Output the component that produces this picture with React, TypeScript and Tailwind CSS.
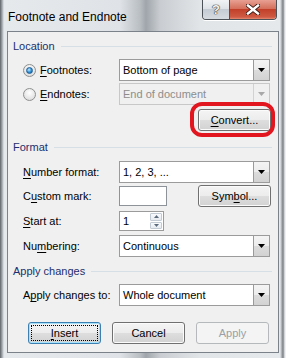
import React from 'react';

type Children = { children?: React.ReactNode };

// underlined access key, like the Win32 dialog labels
function Key({ children }: Children) {
  return <span className="underline decoration-1 underline-offset-[2px]">{children}</span>;
}

function GroupHeader({ title, className }: { title: string; className?: string }) {
  return (
    <div className={`flex h-[16px] items-center ${className ?? ''}`}>
      <span className="text-[#1a2f6e]">{title}</span>
      <div className="ml-[6px] h-px flex-1 bg-[#d5dfe5]" />
    </div>
  );
}

function Radio({ checked }: { checked?: boolean }) {
  return (
    <span className="flex h-[13px] w-[13px] items-center justify-center rounded-full border border-[#8e8f8f] bg-[radial-gradient(circle_at_50%_35%,#ffffff,#e2e2e2_70%,#cfcfcf)]">
      {checked && (
        <span className="h-[7px] w-[7px] rounded-full border border-[#1f5e96] bg-[radial-gradient(circle_at_40%_35%,#bfeaff,#2c8fd6_55%,#12558f)]" />
      )}
    </span>
  );
}

function DropArrow({ disabled }: { disabled?: boolean }) {
  return (
    <div
      className={`flex w-[16px] items-center justify-center border-l ${
        disabled
          ? 'border-[#d2d2d2] bg-[#f0f0f0]'
          : 'border-[#9a9a9a] bg-[linear-gradient(#f4f4f4,#ececec_50%,#dcdcdc_50%,#d2d2d2)]'
      }`}
    >
      <svg width="7" height="4" viewBox="0 0 7 4">
        <path d="M0 0h7L3.5 4z" fill={disabled ? '#a8a8a8' : '#000'} />
      </svg>
    </div>
  );
}

function Select({ value, disabled }: { value: string; disabled?: boolean }) {
  return (
    <div
      className={`flex h-[22px] w-[151px] border ${
        disabled ? 'border-[#c8c8c8] bg-[#f0f0f0] text-[#8d8d8d]' : 'border-[#9b9b9b] bg-white text-black'
      }`}
    >
      <div className="flex flex-1 items-center pl-[3px]">{value}</div>
      <DropArrow disabled={disabled} />
    </div>
  );
}

function Btn({ children, focused, disabled, className }: Children & { focused?: boolean; disabled?: boolean; className?: string }) {
  const look = disabled
    ? 'border-[#b5b9bc] bg-[#f4f4f4] text-[#9aa0a6]'
    : focused
      ? 'border-[#3c7fb1] shadow-[inset_0_0_0_1px_#a5e1fa] bg-[linear-gradient(#f4f4f4,#ececec_50%,#dedede_50%,#d2d2d2)] text-black'
      : 'border-[#707070] shadow-[inset_0_0_0_1px_#fbfbfb] bg-[linear-gradient(#f4f4f4,#ececec_50%,#dedede_50%,#d2d2d2)] text-black';
  return (
    <div className={`relative flex h-[22px] w-[73px] items-center justify-center rounded-[3px] border ${look} ${className ?? ''}`}>
      {focused && <div className="absolute inset-[2px] border border-dotted border-black" />}
      <span className="relative">{children}</span>
    </div>
  );
}

function Spinner({ value }: { value: string }) {
  return (
    <div className="flex h-[20px] w-[45px] border border-[#9b9b9b] bg-white">
      <div className="flex flex-1 items-center pl-[3px]">{value}</div>
      <div className="flex w-[14px] flex-col gap-px p-px">
        <div className="flex flex-1 items-center justify-center rounded-[1px] border border-[#c2cad3] bg-[linear-gradient(#f8fafc,#e6ebf0)]">
          <svg width="5" height="3" viewBox="0 0 5 3">
            <path d="M0 3h5L2.5 0z" fill="#5b6b7c" />
          </svg>
        </div>
        <div className="flex flex-1 items-center justify-center rounded-[1px] border border-[#c2cad3] bg-[linear-gradient(#f8fafc,#e6ebf0)]">
          <svg width="5" height="3" viewBox="0 0 5 3">
            <path d="M0 0h5L2.5 3z" fill="#5b6b7c" />
          </svg>
        </div>
      </div>
    </div>
  );
}

function Row({ label, children, className }: { label: React.ReactNode; className?: string } & Children) {
  return (
    <div className={`flex items-center pl-[10px] ${className ?? ''}`}>
      <div className="w-[96px]">{label}</div>
      {children}
    </div>
  );
}

export default function App() {
  return (
    <div className="relative h-[358px] w-[286px] overflow-hidden bg-[linear-gradient(90deg,#5e6368_0px,#9ea4aa_2px,#e6e9ec_4px,#dfe3e7_120px,#b9bec3_140px,#9fa5ab_146px,#c9cdd1_160px,#e2e5e8_200px,#e6e9ec_280px,#7a7f84_283px,#eef0f2_285px)] font-['Liberation_Sans',Arial,sans-serif] text-[11px] leading-[16px]">
      {/* title bar */}
      <div className="flex h-[31px] items-start">
        <div className="pl-[8px] pt-[9px] text-[12px] text-black">Footnote and Endnote</div>
        <div className="ml-auto mr-[9px] flex h-[20px] overflow-hidden rounded-b-[4px] border border-t-0 border-[#4c5258] shadow-[0_1px_0_#ffffff]">
          <div className="flex w-[27px] items-center justify-center border-r border-[#4c5258] bg-[linear-gradient(#f1f3f5,#dfe3e7_45%,#c6ccd3_50%,#d5dbe1)] text-[13px] font-bold text-[#f4f4f4] [text-shadow:0_0_1px_#333,0_0_1px_#333,0_0_1px_#333]">
            ?
          </div>
          <div className="flex w-[46px] items-center justify-center bg-[linear-gradient(#e8a092,#d4705c_45%,#c2402a_50%,#cf5a43_90%,#e58a72)]">
            <svg width="14" height="11" viewBox="0 0 14 11">
              <path d="M2 1.5 L12 9.5 M12 1.5 L2 9.5" stroke="#3a1a14" strokeWidth="4.2" strokeLinecap="square" />
              <path d="M2 1.5 L12 9.5 M12 1.5 L2 9.5" stroke="#ffffff" strokeWidth="2.4" strokeLinecap="square" />
            </svg>
          </div>
        </div>
      </div>

      {/* client area */}
      <div className="ml-[7px] flex h-[322px] w-[272px] flex-col border border-[#7b8289] bg-[#f0f0f0] pl-[5px] pr-[6px] pt-[6px] text-black">
        <GroupHeader title="Location" />

        <div className="mt-[5px] flex items-center pl-[10px]">
          <div className="flex w-[96px] items-center gap-[4px]">
            <Radio checked />
            <span>
              <Key>F</Key>ootnotes:
            </span>
          </div>
          <Select value="Bottom of page" />
        </div>

        <div className="mt-[2px] flex items-center pl-[10px]">
          <div className="flex w-[96px] items-center gap-[4px]">
            <Radio />
            <span>
              <Key>E</Key>ndnotes:
            </span>
          </div>
          <Select value="End of document" disabled />
        </div>

        <div className="mt-[4px] flex justify-end pr-[1px]">
          <Btn>
            <Key>C</Key>onvert...
          </Btn>
        </div>

        <GroupHeader title="Format" className="mt-[8px]" />

        <Row className="mt-[6px]" label={<><Key>N</Key>umber format:</>}>
          <Select value="1, 2, 3, ..." />
        </Row>

        <Row className="mt-[2px]" label={<>C<Key>u</Key>stom mark:</>}>
          <div className="h-[20px] w-[48px] border border-[#8e939a] bg-white" />
          <Btn className="ml-auto mr-[1px]">
            Sym<Key>b</Key>ol...
          </Btn>
        </Row>

        <Row className="mt-[4px]" label={<><Key>S</Key>tart at:</>}>
          <Spinner value="1" />
        </Row>

        <Row className="mt-[4px]" label={<>Nu<Key>m</Key>bering:</>}>
          <Select value="Continuous" />
        </Row>

        <GroupHeader title="Apply changes" className="mt-[6px]" />

        <Row className="mt-[5px]" label={<>A<Key>p</Key>ply changes to:</>}>
          <Select value="Whole document" />
        </Row>

        <div className="mt-[16px] flex gap-[11px] pl-[15px]">
          <Btn focused>
            <Key>I</Key>nsert
          </Btn>
          <Btn>Cancel</Btn>
          <Btn disabled>Apply</Btn>
        </div>
      </div>

      {/* red annotation drawn over the dialog */}
      <div className="absolute left-[190px] top-[102px] h-[35px] w-[85px] rounded-[12px] border-[4px] border-[#e2161f]" />
    </div>
  );
}
